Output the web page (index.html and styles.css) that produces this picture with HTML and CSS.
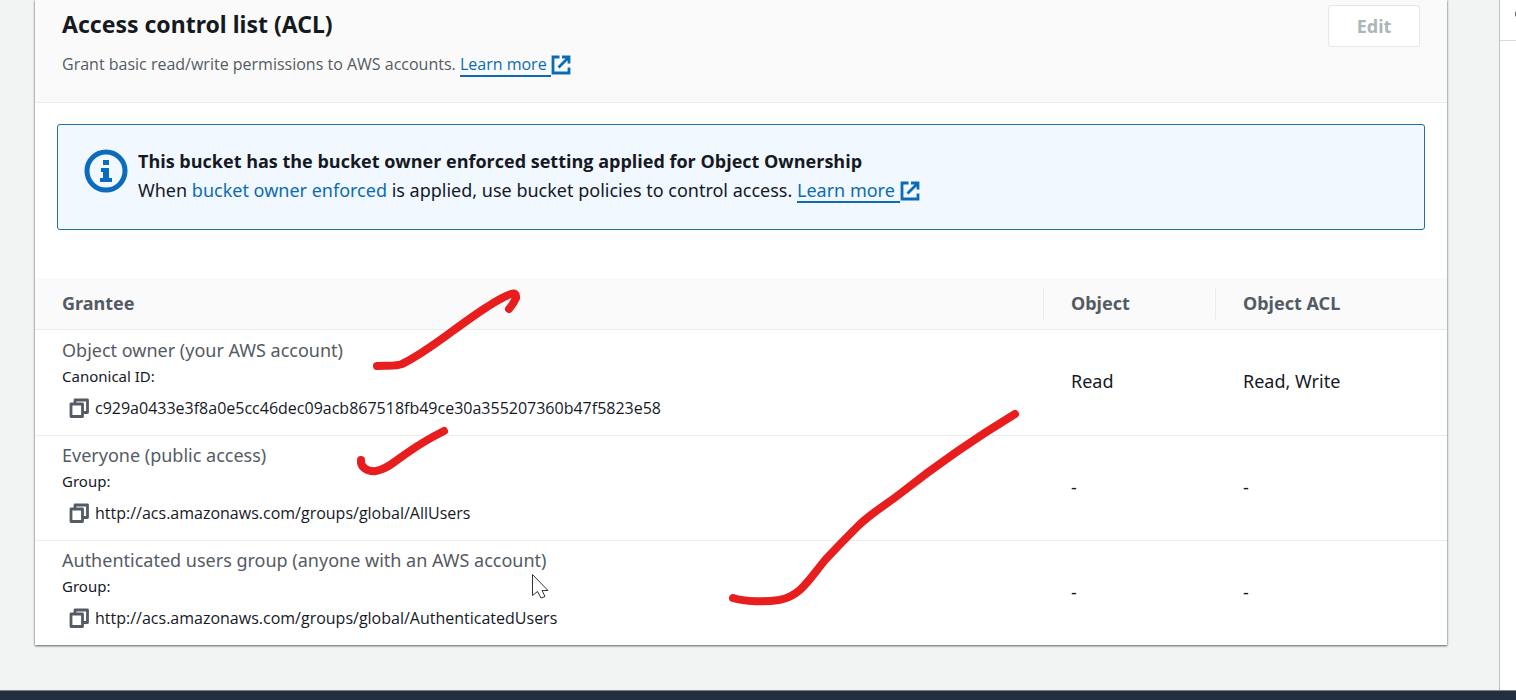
FILE: index.html
```html
<!DOCTYPE html>
<html lang="en">
<head>
<meta charset="utf-8">
<title>Access control list (ACL)</title>
<link rel="stylesheet" href="styles.css">
</head>
<body>
<svg class="sprite" aria-hidden="true">
  <symbol id="external" viewBox="0 0 20 20">
    <path d="M8.500 2H2v16h16v-5.500M11 2h7v6.500M18 2L7.500 12.500" fill="none" stroke="currentColor" stroke-width="2.800"/>
  </symbol>
  <symbol id="copy" viewBox="0 0 20 20">
    <path d="M2 6h11.500v12.500H2zM6 6V2h12.500v12.500h-5" fill="none" stroke="currentColor" stroke-width="2.800" stroke-linejoin="round"/>
  </symbol>
</svg>
<div class="page">
  <main class="content">
    <section class="panel">
      <header class="panel-header">
        <div>
          <h2 class="title">Access control list (ACL)</h2>
          <p class="description">Grant basic read/write permissions to AWS accounts. <a class="learn" href="#acl"><span class="learn-text">Learn more&nbsp;</span><svg class="external"><use href="#external"/></svg></a></p>
        </div>
        <button class="edit" type="button" disabled>Edit</button>
      </header>
      <div class="alert">
        <svg class="info" viewBox="0 0 44 44" aria-hidden="true">
          <circle cx="22" cy="22" r="19" fill="none" stroke="currentColor" stroke-width="5"/>
          <path d="M19 11h6v5h-6zM17 19h8v10h3v4H16v-4h3v-6h-2z" fill="currentColor"/>
        </svg>
        <div class="alert-text">
          <strong>This bucket has the bucket owner enforced setting applied for Object Ownership</strong>
          <p>When <a href="#enforced">bucket owner enforced</a> is applied, use bucket policies to control access. <a class="learn" href="#ownership"><span class="learn-text">Learn more&nbsp;</span><svg class="external"><use href="#external"/></svg></a></p>
        </div>
      </div>
      <table class="grants">
        <thead>
          <tr><th class="grantee"><span>Grantee</span></th><th class="perm"><span>Object</span></th><th class="acl"><span>Object ACL</span></th></tr>
        </thead>
        <tbody>
          <tr>
            <td class="who"><div class="name">Object owner (your AWS account)</div><div class="kind">Canonical ID:</div><div class="value"><button class="copy" type="button" aria-label="Copy canonical ID"><svg><use href="#copy"/></svg></button>c929a0433e3f8a0e5cc46dec09acb867518fb49ce30a355207360b47f5823e58</div></td>
            <td>Read</td><td>Read, Write</td>
          </tr>
          <tr>
            <td class="who"><div class="name">Everyone (public access)</div><div class="kind">Group:</div><div class="value"><button class="copy" type="button" aria-label="Copy group"><svg><use href="#copy"/></svg></button>http://acs.amazonaws.com/groups/global/AllUsers</div></td>
            <td>-</td><td>-</td>
          </tr>
          <tr>
            <td class="who"><div class="name">Authenticated users group (anyone with an AWS account)</div><div class="kind">Group:</div><div class="value"><button class="copy" type="button" aria-label="Copy group"><svg><use href="#copy"/></svg></button>http://acs.amazonaws.com/groups/global/AuthenticatedUsers</div></td>
            <td>-</td><td>-</td>
          </tr>
        </tbody>
      </table>
    </section>
  </main>
  <aside class="side"><div class="side-head"><svg class="side-icon" viewBox="0 0 8 8" aria-hidden="true"><circle cx="4" cy="4" r="4" fill="#545b64"/></svg></div></aside>
</div>
<footer class="footer"></footer>
<svg class="ink" width="1516" height="700" aria-hidden="true">
  <g class="strokes">
    <path d="M377 366C386 365 394 367 402 364C428 352 457 326 487 307Q502 297 511 294Q517 292 516 298Q514 303 509 309"/>
    <path d="M361 460C360 467 367 472 376 471C386 470 395 461 407 453Q424 441 444 431"/>
    <path d="M733 598C745 602 766 602 779 600C801 596 809 579 826 559Q841 543 857 527C872 512 886 505 901 493C939 463 977 437 1015 414"/>
  </g>
  <path class="cursor" d="M532.500 574.500V595.500L537.500 591.500L541 598L545 596.500L542 590.500H548Z"/>
</svg>
</body>
</html>
```
FILE: styles.css
```css
* { box-sizing: border-box; }
body {
  margin: 0;
  min-height: 100vh;
  display: flex;
  flex-direction: column;
  position: relative;
  background: #f2f3f3;
  color: #16191f;
  font: 18px/26px "Noto Sans", sans-serif;
}
p, h2 { margin: 0; }
a { color: #0b6cb5; text-decoration: none; }
.sprite { position: absolute; width: 0; height: 0; }
.page { flex: 1; display: flex; }
.content { flex: 1; padding: 0 52px 44px 35px; }
.panel {
  background: #fff;
  box-shadow: 0 1px 2px #5f6b6d, 0 0 2px #aab7b8;
}
.panel-header {
  display: flex;
  justify-content: space-between;
  align-items: flex-start;
  padding: 5px 27px 24px;
  background: #fafafa;
  border-bottom: 1px solid #eaeded;
}
.title { font-size: 23px; line-height: 38px; }
.description {
  margin-top: 8px;
  font-family: "Open Sans", sans-serif;
  font-size: 16px;
  line-height: 27px;
  color: #545b64;
}
.learn { display: inline-flex; align-items: center; }
.learn-text { border-bottom: 2px solid #0b6cb5; line-height: 22px; }
.external { width: 20px; height: 20px; }
.edit {
  width: 92px;
  height: 42px;
  border: 1px solid #e3e7e7;
  border-radius: 3px;
  background: #fff;
  color: #aab7b8;
  font: bold 18px/26px "Noto Sans", sans-serif;
}
.alert {
  display: flex;
  gap: 10px;
  margin: 21px 22px 48px;
  padding: 22px 26px 24px;
  border: 1px solid #1f6fa8;
  border-radius: 3px;
  background: #f1f8ff;
}
.info { width: 44px; height: 44px; flex: none; color: #0b6cbd; margin-top: 2px; }
.alert-text strong { display: block; font-family: "Open Sans", sans-serif; line-height: 28px; }
.alert-text p { line-height: 30px; }
.grants { width: 100%; border-collapse: separate; border-spacing: 0; table-layout: fixed; }
.grants th {
  height: 52px;
  padding: 0 0 2px;
  background: #fafafa;
  border-bottom: 1px solid #eaeded;
  color: #545b64;
  text-align: left;
}
.grants th span { display: block; padding: 3px 27px; border-left: 1px solid #eaeded; }
.grants .grantee span { border-left: 0; }
.perm { width: 172px; }
.acl { width: 232px; }
.grants td { height: 105px; padding: 0 28px 3px; }
.grants .who { padding: 6px 27px 8px; }
.grants tr + tr td { border-top: 1px solid #eaeded; }
.name { color: #545b64; }
.kind { font-size: 15px; }
.value {
  display: flex;
  align-items: center;
  gap: 6px;
  height: 38px;
  padding-left: 7px;
  font-family: "Open Sans", sans-serif;
  font-size: 16px;
}
.copy { width: 20px; height: 20px; padding: 0; border: 0; background: none; color: #545b64; }
.copy svg { display: block; width: 20px; height: 20px; }
.side { width: 17px; background: #fff; border-left: 1px solid #bcc2c4; overflow: hidden; }
.side-head { display: flex; height: 41px; padding: 10px 0 0 15px; border-bottom: 1px solid #d5dbdb; }
.side-icon { width: 8px; height: 8px; flex: none; }
.footer { height: 10px; background: #232f3e; border-top: 1px solid #77818a; }
.ink { position: absolute; left: 0; top: 0; pointer-events: none; }
.strokes { fill: none; stroke: #e71d1e; stroke-width: 8; stroke-linecap: round; stroke-linejoin: round; }
.cursor { fill: #fff; stroke: #30343b; stroke-width: 1; }
```
